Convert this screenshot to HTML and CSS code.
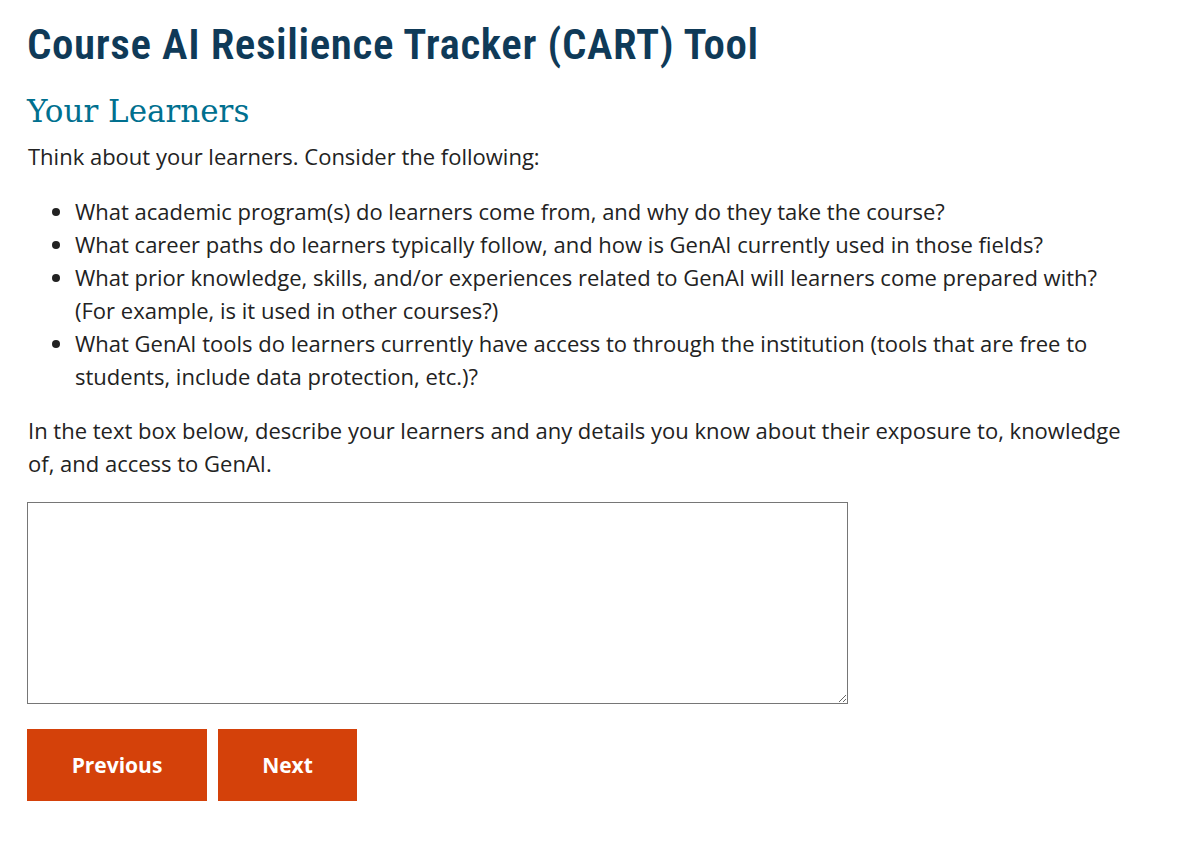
FILE: index.html
```html
<!DOCTYPE html>
<html lang="en">
<head>
<meta charset="utf-8">
<title>CART Tool</title>
<link rel="stylesheet" href="styles.css">
</head>
<body>
<main class="page">
  <h1 class="title">Course AI Resilience Tracker (CART) Tool</h1>
  <h2 class="section">Your Learners</h2>
  <p class="intro">Think about your learners. Consider the following:</p>
  <ul class="list">
    <li>What academic program(s) do learners come from, and why do they take the course?</li>
    <li>What career paths do learners typically follow, and how is GenAI currently used in those fields?</li>
    <li>What prior knowledge, skills, and/or experiences related to GenAI will learners come prepared with? (For example, is it used in other courses?)</li>
    <li>What GenAI tools do learners currently have access to through the institution (tools that are free to students, include data protection, etc.)?</li>
  </ul>
  <p class="prompt">In the text box below, describe your learners and any details you know about their exposure to, knowledge of, and access to GenAI.</p>
  <textarea class="box" aria-label="Describe your learners"></textarea>
  <div class="actions">
    <button class="btn btn-prev" type="button">Previous</button>
    <button class="btn btn-next" type="button">Next</button>
  </div>
</main>
</body>
</html>
```
FILE: styles.css
```css
html, body {
  margin: 0;
  padding: 0;
  background: #ffffff;
}
.page {
  padding: 18px 27px 40px 27px;
  max-width: 1100px;
  font-family: "Open Sans", "Noto Sans", sans-serif;
  color: #222222;
  font-size: 22px;
  line-height: 33px;
}
.title {
  margin: 0;
  font-family: "Roboto Condensed", "Roboto", sans-serif;
  font-weight: 600;
  font-size: 43px;
  line-height: 52px;
  color: #0f3a58;
  letter-spacing: 0.6px;
}
.section {
  margin: 21px 0 0 0;
  font-family: "DejaVu Serif", serif;
  font-weight: normal;
  font-size: 31px;
  line-height: 40px;
  color: #00708f;
}
.intro {
  margin: 9px 0 0 1px;
}
.list {
  margin: 22px 0 0 0;
  padding-left: 48px;
}
.prompt {
  margin: 21px 0 0 1px;
}
.box {
  display: block;
  box-sizing: border-box;
  width: 821px;
  height: 202px;
  margin: 22px 0 0 0;
  border: 1px solid #767676;
  border-radius: 0;
  padding: 4px;
  font-family: "Open Sans", sans-serif;
  font-size: 18px;
}
.actions {
  display: flex;
  gap: 11px;
  margin-top: 25px;
}
.btn {
  height: 72px;
  border: 0;
  background: #d4410a;
  color: #ffffff;
  font-family: "Open Sans", sans-serif;
  font-weight: bold;
  font-size: 21px;
  cursor: pointer;
}
.btn-prev { width: 180px; }
.btn-next { width: 139px; }
```
